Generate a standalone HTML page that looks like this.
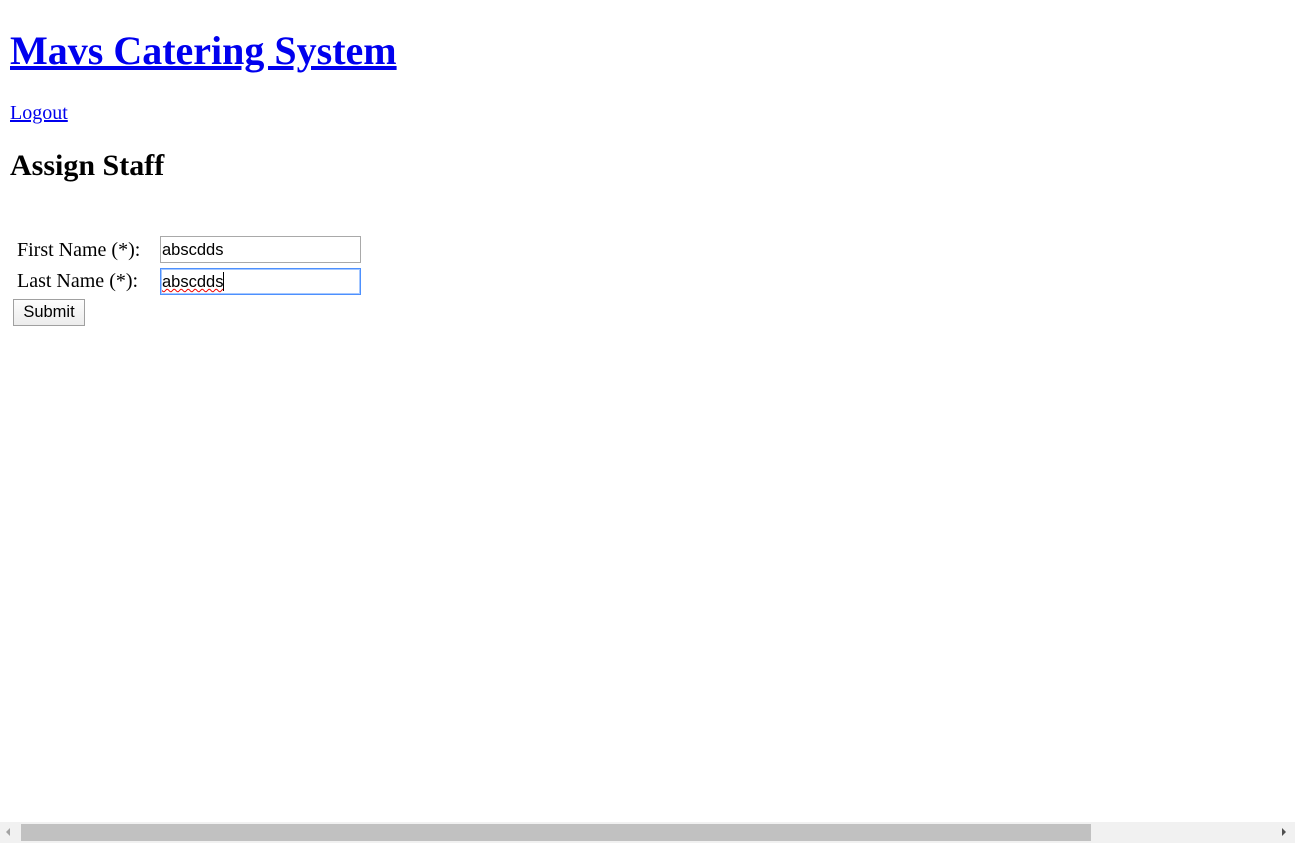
<!DOCTYPE html>
<html><head><meta charset="utf-8"><style>
html,body{margin:0;padding:0;width:1295px;height:843px;overflow:hidden;background:#fff;font-family:"Liberation Serif",serif;}
.a{position:absolute;line-height:1;white-space:nowrap;margin:0}
a{color:#0000ee;text-decoration:underline}
.inp{position:absolute;box-sizing:border-box;border:1px solid #a9a9a9;font-family:"Liberation Sans",sans-serif;font-size:16.5px;padding:1px 1px 0;line-height:25px;color:#000;background:#fff}
.btn{position:absolute;box-sizing:border-box;border:1px solid #a0a0a0;background:linear-gradient(#fdfdfd,#ececec);font-family:"Liberation Sans",sans-serif;font-size:16.5px;text-align:center;line-height:25px;color:#000}
.sb{position:absolute;left:0;top:822px;width:1295px;height:21px;background:#f1f1f1}
</style></head><body>
<h1 class="a" style="left:10px;top:31px;font-size:40px;font-weight:bold"><a href="#">Mavs Catering System</a></h1>
<div class="a" style="left:10px;top:103px;font-size:20px"><a href="#">Logout</a></div>
<h2 class="a" style="left:10px;top:151px;font-size:30px;font-weight:bold">Assign Staff</h2>
<div class="a" style="left:17px;top:240px;font-size:20px">First Name (*):</div>
<div class="a" style="left:17px;top:271px;font-size:20px">Last Name (*):</div>
<div class="inp" style="left:160px;top:236px;width:201px;height:27px">abscdds</div>
<div class="inp" style="left:160px;top:268px;width:201px;height:27px;border:1px solid #4d90fe;box-shadow:0 0 0 1px #a6c8ff inset"><span style="text-decoration:underline wavy #e00;text-decoration-thickness:1px">abscdds</span><span style="display:inline-block;width:1px;height:19px;background:#000;vertical-align:-4px"></span></div>
<div class="btn" style="left:13px;top:299px;width:72px;height:27px">Submit</div>
<div class="sb">
<div style="position:absolute;left:21px;top:2px;width:1070px;height:17px;background:#c1c1c1"></div>
<div style="position:absolute;left:6px;top:6px;width:0;height:0;border-top:4px solid transparent;border-bottom:4px solid transparent;border-right:4px solid #a3a3a3"></div>
<div style="position:absolute;left:1282px;top:6px;width:0;height:0;border-top:4px solid transparent;border-bottom:4px solid transparent;border-left:4px solid #505050"></div>
</div>
</body></html>
